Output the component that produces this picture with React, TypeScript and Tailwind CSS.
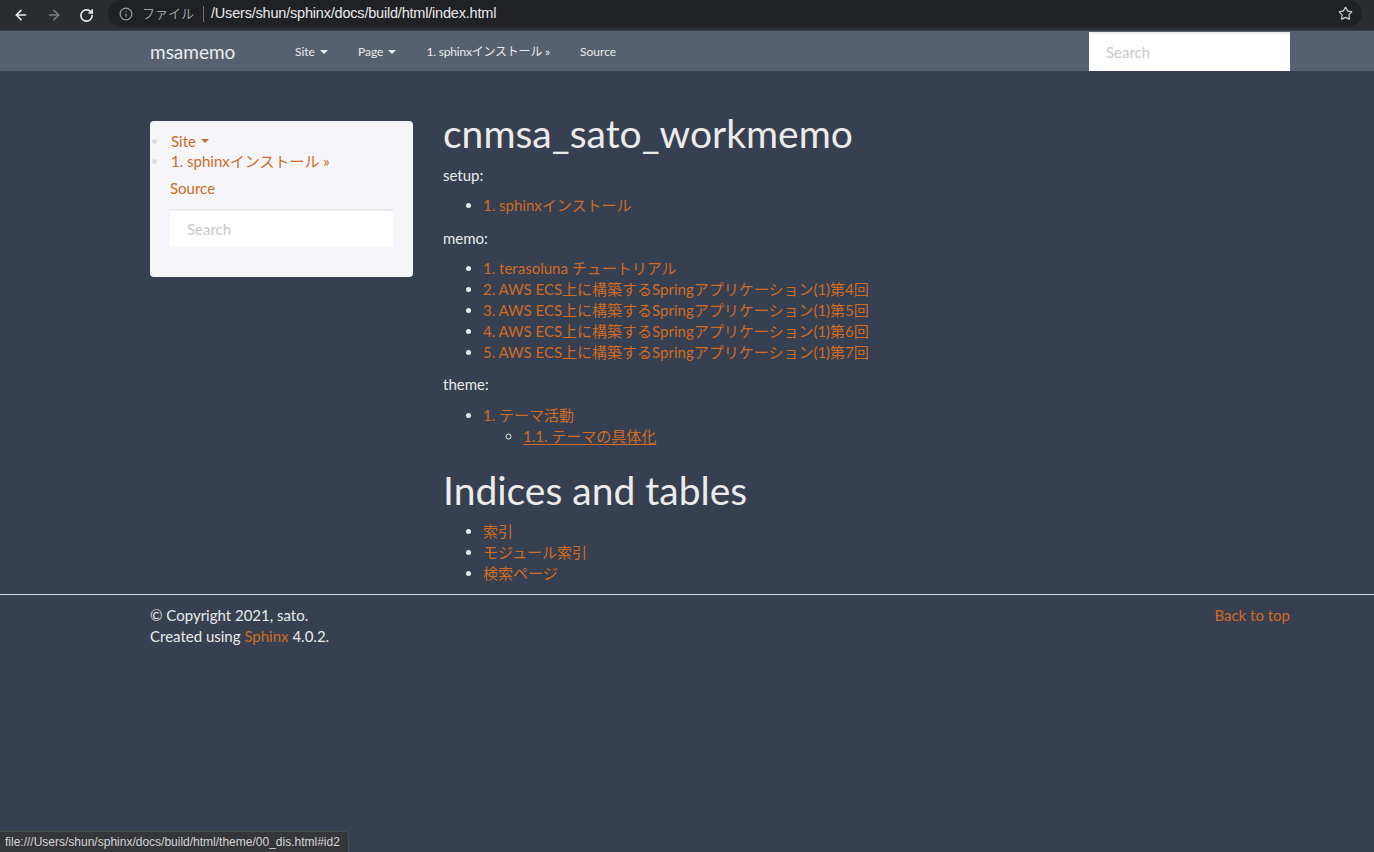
import React from 'react';
import { ArrowLeft, ArrowRight, RotateCw, Info, Star } from 'lucide-react';

const font = "font-['Lato','Noto_Sans_CJK_JP',sans-serif]";

const Caret: React.FC<{ className?: string }> = ({ className }) => (
  <span
    className={`inline-block w-0 h-0 border-l-[4px] border-r-[4px] border-t-[4px] border-l-transparent border-r-transparent ${className ?? ''}`}
  />
);

const Link: React.FC<{ children: React.ReactNode; underline?: boolean }> = ({ children, underline }) => (
  <a href="#" className={`text-[#d06b24] ${underline ? 'underline underline-offset-2' : 'no-underline'}`}>
    {children}
  </a>
);

const Item: React.FC<{ children: React.ReactNode }> = ({ children }) => (
  <li className="h-[21px] leading-[21px] marker:text-[#ebebeb]">{children}</li>
);

const BrowserBar: React.FC = () => (
  <div className="h-[31px] bg-[#2b2c2f] border-b border-[#3d3e42] flex items-center">
    <div className="w-[108px] flex items-center">
      <ArrowLeft className="ml-[13px] w-[16px] h-[16px] text-[#e8eaed]" strokeWidth={2.4} />
      <ArrowRight className="ml-[17px] w-[16px] h-[16px] text-[#7c7e82]" strokeWidth={2.4} />
      <RotateCw className="ml-[17px] w-[15px] h-[15px] text-[#e8eaed]" strokeWidth={2.6} />
    </div>
    <div className="flex-1 mr-[12px] h-[27px] -mt-[3px] rounded-full bg-[#202124] flex items-center">
      <Info className="ml-[11px] w-[14px] h-[14px] text-[#9aa0a6]" strokeWidth={2} />
      <span className={`ml-[9px] text-[13px] text-[#9aa0a6] ${font}`}>ファイル</span>
      <span className="ml-[9px] w-px h-[16px] bg-[#6b6e72]" />
      <span className="ml-[7px] text-[14.5px] text-[#e8eaed] font-['Liberation_Sans',sans-serif] tracking-[-0.2px]">
        /Users/shun/sphinx/docs/build/html/index.html
      </span>
      <Star className="ml-auto mr-[9px] w-[15px] h-[15px] text-[#c8cacd]" strokeWidth={2} />
    </div>
  </div>
);

const NavBar: React.FC = () => (
  <div className="h-[40px] bg-[#566170]">
    <div className="w-[1140px] ml-[150px] flex items-stretch h-full">
      <div className="w-[130px] flex items-center text-[19px] text-[#ebebeb] pt-[2px]">msamemo</div>
      <ul className="flex items-center text-[12px] text-[#ebebeb] pt-[1px]">
        <li className="px-[15px] flex items-center gap-[5px]">
          Site <Caret className="border-t-[#ebebeb]" />
        </li>
        <li className="px-[15px] flex items-center gap-[5px]">
          Page <Caret className="border-t-[#ebebeb]" />
        </li>
        <li className="px-[15px] tracking-[-0.2px]">1. sphinxインストール »</li>
        <li className="px-[15px]">Source</li>
      </ul>
      <div className="ml-auto w-[201px] mt-[1px] bg-white border-t-2 border-[#eeeeee] flex items-center pl-[17px] text-[15px] text-[#c8c8c8]">
        Search
      </div>
    </div>
  </div>
);

const Sidebar: React.FC = () => (
  <div className="w-[263px] mt-[50px]">
    <div className="bg-[#f5f5fa] rounded-[4px] pt-[10px] pb-[30px] pr-[20px]">
      <ul className="text-[15px]">
        <li className="h-[20px] leading-[20px] flex items-center">
          <span className="ml-[2px] w-[5px] h-[5px] rounded-full bg-[#dcdce2]" />
          <span className="ml-[14px] flex items-center gap-[5px] text-[#d06b24]">
            Site <Caret className="border-t-[#d06b24]" />
          </span>
        </li>
        <li className="h-[20px] leading-[20px] flex items-center">
          <span className="ml-[2px] w-[5px] h-[5px] rounded-full bg-[#dcdce2]" />
          <span className="ml-[14px] text-[#d06b24]">1. sphinxインストール »</span>
        </li>
      </ul>
      <div className="pl-[20px] mt-[7px] h-[21px] leading-[21px] text-[15px] text-[#d06b24]">Source</div>
      <div className="ml-[20px] mt-[10px] h-[38px] bg-white border-t-2 border-[#ececec] flex items-center pl-[17px] text-[15px] text-[#c8c8c8]">
        Search
      </div>
    </div>
  </div>
);

const Main: React.FC = () => (
  <div className="ml-[30px] flex-1 text-[15px] text-[#ebebeb]">
    <h1 className="mt-[41px] mb-[10px] text-[39px] leading-[43px] font-normal">cnmsa_sato_workmemo</h1>
    <p className="h-[21px] leading-[21px] mb-[9px]">setup:</p>
    <ul className="list-disc pl-[40px] mb-[12px]">
      <Item><Link>1. sphinxインストール</Link></Item>
    </ul>
    <p className="h-[21px] leading-[21px] mb-[9px]">memo:</p>
    <ul className="list-disc pl-[40px] mb-[11px]">
      <Item><Link>1. terasoluna チュートリアル</Link></Item>
      <Item><Link>2. AWS ECS上に構築するSpringアプリケーション(1)第4回</Link></Item>
      <Item><Link>3. AWS ECS上に構築するSpringアプリケーション(1)第5回</Link></Item>
      <Item><Link>4. AWS ECS上に構築するSpringアプリケーション(1)第6回</Link></Item>
      <Item><Link>5. AWS ECS上に構築するSpringアプリケーション(1)第7回</Link></Item>
    </ul>
    <p className="h-[21px] leading-[21px] mb-[10px]">theme:</p>
    <ul className="list-disc pl-[40px]">
      <li className="leading-[21px] marker:text-[#ebebeb]">
        <Link>1. テーマ活動</Link>
        <ul className="list-[circle] pl-[40px]">
          <Item><Link underline>1.1. テーマの具体化</Link></Item>
        </ul>
      </li>
    </ul>
    <h1 className="mt-[22px] mb-[9px] text-[39px] leading-[43px] font-normal">Indices and tables</h1>
    <ul className="list-disc pl-[40px] mb-[10px]">
      <Item><Link>索引</Link></Item>
      <Item><Link>モジュール索引</Link></Item>
      <Item><Link>検索ページ</Link></Item>
    </ul>
  </div>
);

const App: React.FC = () => {
  return (
    <div className={`relative min-h-[852px] bg-[#364050] ${font}`}>
      <BrowserBar />
      <NavBar />
      <div className="w-[1140px] ml-[150px] flex items-start">
        <Sidebar />
        <Main />
      </div>
      <footer className="border-t border-[#d8d8d8] pt-[10px] text-[15px] text-[#ebebeb]">
        <div className="w-[1140px] ml-[150px] flex justify-between leading-[21px]">
          <div>
            <p>© Copyright 2021, sato.</p>
            <p>
              Created using <Link>Sphinx</Link> 4.0.2.
            </p>
          </div>
          <Link>Back to top</Link>
        </div>
      </footer>
      <div className="absolute left-0 bottom-0 h-[21px] pl-[5px] pr-[8px] bg-[#35363a] border-t border-r border-[#4a4b4f] rounded-tr-[4px] flex items-center text-[12px] text-[#d6d6d6] font-['Liberation_Sans',sans-serif]">
        file:///Users/shun/sphinx/docs/build/html/theme/00_dis.html#id2
      </div>
    </div>
  );
};

export default App;
